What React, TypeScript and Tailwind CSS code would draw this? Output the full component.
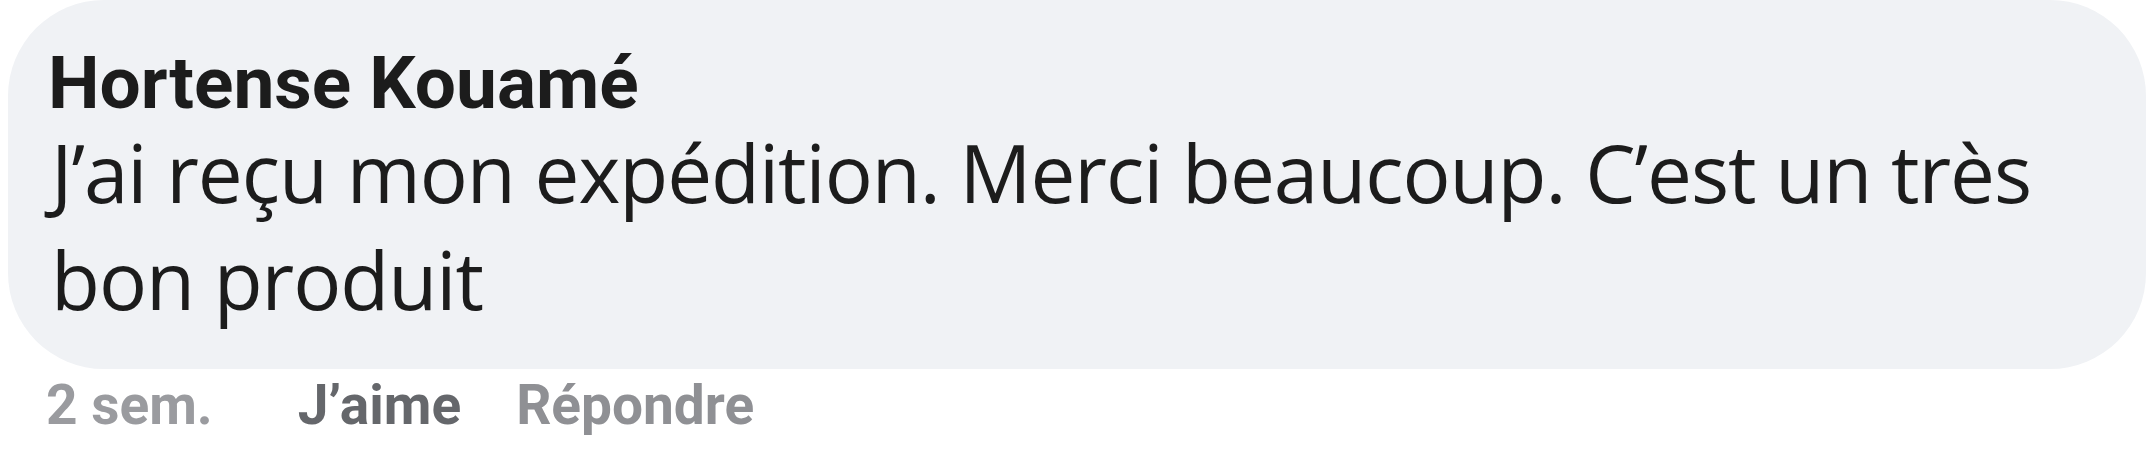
export default function App() {
  return (
    <div className="w-[2154px] h-[468px] bg-white overflow-hidden">
      <div className="mx-2 rounded-[96px] bg-[#f0f2f5] pt-[48px] pb-[37px] pl-[40px] pr-[40px]">
        <div className="font-['Roboto',sans-serif] font-bold text-[73px] leading-[70px] text-[#1c1c1c]">
          Hortense Kouamé
        </div>
        <div className="ml-[3px] font-['Open_Sans',sans-serif] text-[80px] leading-[107px] tracking-[-1.05px] text-[#1c1c1c]">
          J’ai reçu mon expédition. Merci beaucoup. C’est un très bon produit
        </div>
      </div>
      <div className="mt-[4px] flex items-center pl-[46px] font-['Roboto',sans-serif] font-bold text-[55px] leading-[64px]">
        <span className="text-[#9a9b9f]">2 sem.</span>
        <span className="ml-[85px] text-[#65676b]">J’aime</span>
        <span className="ml-[55px] text-[#8f9094]">Répondre</span>
      </div>
    </div>
  );
}
